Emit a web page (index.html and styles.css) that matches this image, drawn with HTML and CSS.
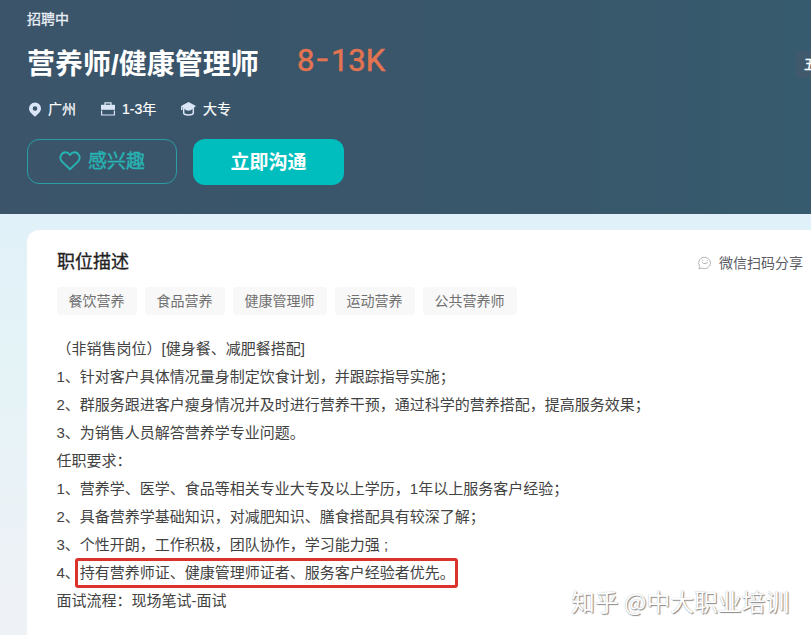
FILE: index.html
```html
<!DOCTYPE html>
<html lang="zh-CN">
<head>
<meta charset="utf-8">
<title>营养师/健康管理师</title>
<link rel="stylesheet" href="styles.css">
</head>
<body>
<header class="banner">
  <div class="status">招聘中</div>
  <div class="title-row">
    <h1>营养师/健康管理师</h1>
    <span class="salary">8<span class="dash">-</span>13K</span>
    <span class="benefit">五</span>
  </div>
  <div class="meta">
    <span class="meta-item city"><svg width="14" height="15" viewBox="0 0 14 15"><path fill="#dbe5f8" fill-rule="evenodd" d="M7 .5a6 6 0 0 0-6 6c0 3.400 3 5.500 6 8.200 3-2.700 6-4.800 6-8.200a6 6 0 0 0-6-6Zm0 3.700a2.300 2.300 0 1 1 0 4.600 2.300 2.300 0 0 1 0-4.600Z"/></svg>广州</span>
    <span class="meta-item years"><svg width="14" height="14" viewBox="0 0 14 14"><path fill="none" stroke="#dbe5f8" stroke-width="1.300" d="M4 4V.8h6V4"/><path fill="#dbe5f8" d="M0 2.800h14v5H0z"/><path fill="none" stroke="#dbe5f8" stroke-width="1.200" d="M.6 8.600v4.400h12.800V8.600"/></svg>1-3年</span>
    <span class="meta-item degree"><svg width="15" height="14" viewBox="0 0 15 14"><path fill="#dbe5f8" d="M7.500 0 0 4l3 2.500Q7.500 11 12 6.500L15 4Z"/><path fill="none" stroke="#dbe5f8" stroke-width="1.500" d="M2.700 5.500V11c0 2.500 9.600 2.500 9.600 0V5.500M.7 4.500V8"/></svg>大专</span>
  </div>
  <div class="actions">
    <button class="btn like"><svg width="22" height="20" viewBox="0 0 22 20"><path fill="none" stroke="#27b4b3" stroke-width="1.900" stroke-linejoin="round" d="M11 18.200 3 10.600C-1 6.200 3.200 1.300 6.500 1.300c2.300 0 3.700 1.500 4.500 2.700.8-1.200 2.200-2.700 4.500-2.700 3.300 0 7.500 4.900 3.500 9.300Z"/></svg><span>感兴趣</span></button>
    <button class="btn chat"><span>立即沟通</span></button>
  </div>
</header>
<main class="card">
  <div class="card-head">
    <h2>职位描述</h2>
    <span class="share"><svg width="14" height="14" viewBox="0 0 14 14"><g fill="none" stroke="#b6b6b8" stroke-linecap="round"><path d="M1.600 10.200A6 5.700 0 1 1 4 12.100L1.200 12.700Z"/><path d="M4.200 6.500c1.200 1.600 4.400 1.600 5.600 0M4.700 4.500v.2M9.300 4.500v.2"/></g></svg>微信扫码分享</span>
  </div>
  <div class="tags"><span>餐饮营养</span><span>食品营养</span><span>健康管理师</span><span>运动营养</span><span>公共营养师</span></div>
  <div class="desc">
    <p>（非销售岗位）[健身餐、减肥餐搭配]</p>
    <p>1、针对客户具体情况量身制定饮食计划，并跟踪指导实施；</p>
    <p>2、群服务跟进客户瘦身情况并及时进行营养干预，通过科学的营养搭配，提高服务效果；</p>
    <p>3、为销售人员解答营养学专业问题。</p>
    <p>任职要求：</p>
    <p>1、营养学、医学、食品等相关专业大专及以上学历，1年以上服务客户经验；</p>
    <p>2、具备营养学基础知识，对减肥知识、膳食搭配具有较深了解；</p>
    <p>3、个性开朗，工作积极，团队协作，学习能力强 ;</p>
    <p>4、<span class="mark">持有营养师证、健康管理师证者、服务客户经验者优先。</span></p>
    <p>面试流程：现场笔试-面试</p>
  </div>
</main>
<div class="watermark">知乎 @中大职业培训</div>
</body>
</html>
```
FILE: styles.css
```css
* { box-sizing: border-box; }
body {
  margin: 0;
  width: 811px;
  height: 635px;
  overflow: hidden;
  position: relative;
  background: linear-gradient(180deg, #e1f1f9 214px, #e4f3f6 360px, #edf2f7 560px, #eef1f6 635px);
  font-family: "Liberation Sans", "Noto Sans CJK SC", sans-serif;
}
h1, h2, p { margin: 0; }
svg { flex: none; }
.banner {
  height: 214px;
  padding: 9px 0 0 27px;
  background: linear-gradient(90deg, #3b546a, #38576b 70%, #375b6e);
  color: #fff;
  overflow: hidden;
}
.status { font-size: 14px; line-height: 20px; color: #e9eef5; -webkit-text-stroke: .3px; }
.title-row { display: flex; align-items: center; height: 40px; margin-top: 15px; white-space: nowrap; }
h1 { width: 270px; flex: none; font-size: 28px; line-height: 40px; font-weight: 700; margin-top: 2px; }
.salary {
  width: 499px;
  flex: none;
  font: 400 31px/34px Roboto, sans-serif;
  -webkit-text-stroke: .5px;
  color: #e27451;
  margin-top: -6px;
}
.dash { display: inline-block; width: 16.500px; text-align: center; transform: translateY(-2px) scaleX(1.300); }
.benefit { flex: none; width: 30px; background: #40596d; border-radius: 4px; padding: 0 8px; font-size: 14px; line-height: 27px; -webkit-text-stroke: .4px; }
.meta { display: flex; margin-top: 15px; height: 20px; font-size: 14px; line-height: 20px; -webkit-text-stroke: .2px; }
.meta-item { display: flex; align-items: center; }
.city { width: 74px; padding-left: 1px; gap: 6px; }
.years { width: 80px; gap: 7px; }
.degree { gap: 7px; }
.actions { display: flex; gap: 16px; margin-top: 20px; }
.btn {
  display: flex;
  align-items: center;
  justify-content: center;
  width: 150px;
  height: 45px;
  padding: 0;
  border: 0;
  border-radius: 12px;
  font-family: inherit;
  font-size: 19px;
  line-height: 26px;
}
.btn span { padding-top: 1px; }
.like { gap: 7px; border: 1px solid #2a9da5; background: transparent; color: #27b4b3; -webkit-text-stroke: .4px; }
.like svg { margin-top: -2px; }
.chat { width: 151px; height: 46px; background: #00bebd; color: #fff; font-weight: 700; }
.card {
  margin: 16px 0 0 27px;
  height: 405px;
  padding: 18px 8px 0 30px;
  background: #fff;
  border-radius: 12px 0 0 0;
}
.card-head { display: flex; justify-content: space-between; align-items: center; height: 28px; }
h2 { font-size: 18px; line-height: 28px; font-weight: 400; color: #222; -webkit-text-stroke: .3px; }
.share { display: flex; align-items: center; gap: 7px; font-size: 14px; line-height: 20px; color: #5c5c66; padding-top: 2px; }
.tags { display: flex; gap: 8px; margin: 11px 0 0 -.5px; }
.tags span { padding: 0 12px; border-radius: 4px; background: #f8f8f8; color: #707070; font-size: 14px; line-height: 28px; }
.desc { margin: 20px 0 0 -.5px; font-size: 15px; line-height: 28px; color: #424242; white-space: nowrap; }
.desc p { height: 28px; }
.mark { position: relative; }
.mark::after {
  content: "";
  position: absolute;
  inset: -6px -3px -7px -5px;
  border: 3px solid #dc322d;
  border-radius: 3px;
}
.watermark {
  position: absolute;
  left: 571px;
  top: 585px;
  font-size: 23.800px;
  line-height: 32px;
  font-family: "Noto Sans CJK SC", sans-serif;
  color: #fff;
  text-shadow: 1px 1px 1px #888, 0 0 1px #aaa;
  white-space: nowrap;
}
```
